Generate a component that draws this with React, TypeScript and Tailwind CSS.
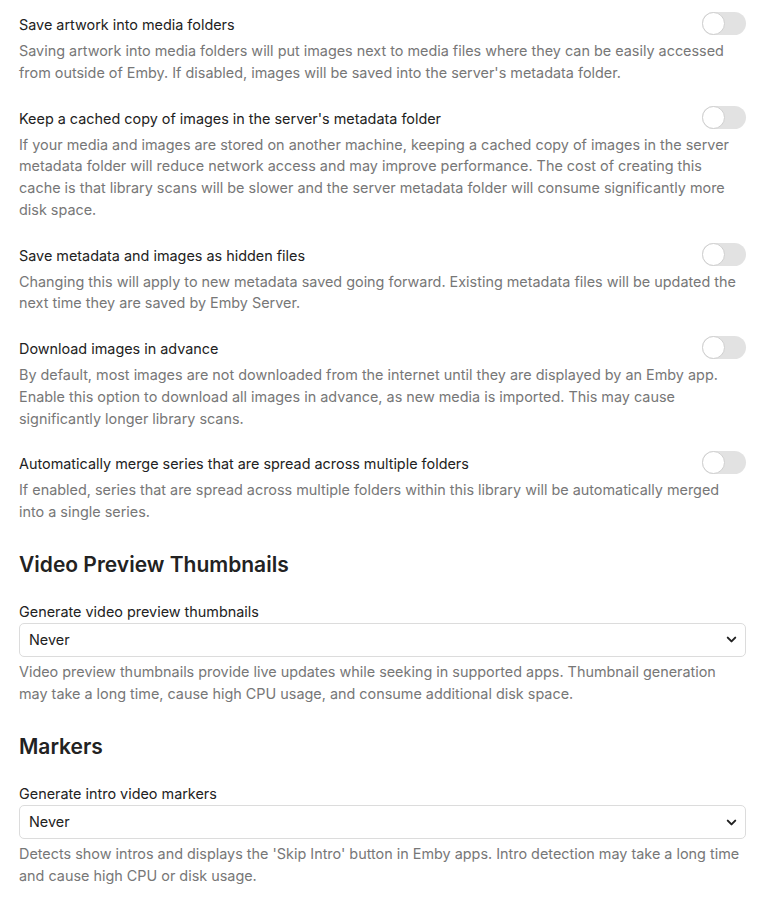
import React from "react";

const font = { fontFamily: "Inter, 'Noto Sans', sans-serif" };

function Toggle() {
  return (
    <div className="relative -mt-[2px] h-[23px] w-[44px] shrink-0 rounded-full bg-[#e2e2e2]">
      <div className="absolute left-0 top-0 h-[23px] w-[23px] rounded-full border border-[#cfcfcf] bg-white" />
    </div>
  );
}

function ToggleItem({ title, desc, first }: { title: string; desc: string; first?: boolean }) {
  return (
    <div className={first ? "" : "mt-[24px]"}>
      <div className="flex items-start justify-between">
        <div className="text-[14.4px] leading-[22px] text-[#222]">{title}</div>
        <Toggle />
      </div>
      <div className="mr-[5px] mt-[4px] text-[14.4px] leading-[21.75px] text-[#777]">{desc}</div>
    </div>
  );
}

function Chevron() {
  return (
    <svg width="15" height="15" viewBox="0 0 24 24" fill="none" stroke="#222" strokeWidth="3.2" strokeLinecap="round" strokeLinejoin="round">
      <path d="M6 9l6 6 6-6" />
    </svg>
  );
}

function SelectField({ label, desc }: { label: string; desc: string }) {
  return (
    <div>
      <div className="text-[14.4px] leading-[22px] text-[#222]">{label}</div>
      <div className="flex h-[34px] items-center justify-between rounded-[5px] border border-[#dcdcdc] bg-white pl-[9px] pr-[6px]">
        <span className="text-[14.4px] text-[#222]">Never</span>
        <Chevron />
      </div>
      <div className="mr-[5px] mt-[4px] text-[14.4px] leading-[21.75px] text-[#777]">{desc}</div>
    </div>
  );
}

export default function App() {
  return (
    <div className="min-h-[905px] bg-white pl-[19px] pr-[24px] pt-[14px]" style={font}>
      <ToggleItem
        first
        title="Save artwork into media folders"
        desc="Saving artwork into media folders will put images next to media files where they can be easily accessed from outside of Emby. If disabled, images will be saved into the server's metadata folder."
      />
      <ToggleItem
        title="Keep a cached copy of images in the server's metadata folder"
        desc="If your media and images are stored on another machine, keeping a cached copy of images in the server metadata folder will reduce network access and may improve performance. The cost of creating this cache is that library scans will be slower and the server metadata folder will consume significantly more disk space."
      />
      <ToggleItem
        title="Save metadata and images as hidden files"
        desc="Changing this will apply to new metadata saved going forward. Existing metadata files will be updated the next time they are saved by Emby Server."
      />
      <ToggleItem
        title="Download images in advance"
        desc="By default, most images are not downloaded from the internet until they are displayed by an Emby app. Enable this option to download all images in advance, as new media is imported. This may cause significantly longer library scans."
      />
      <ToggleItem
        title="Automatically merge series that are spread across multiple folders"
        desc="If enabled, series that are spread across multiple folders within this library will be automatically merged into a single series."
      />

      <h2 className="mt-[28px] text-[21px] font-semibold leading-[28px] text-[#222]">Video Preview Thumbnails</h2>
      <div className="mt-[22px]">
        <SelectField
          label="Generate video preview thumbnails"
          desc="Video preview thumbnails provide live updates while seeking in supported apps. Thumbnail generation may take a long time, cause high CPU usage, and consume additional disk space."
        />
      </div>

      <h2 className="mt-[29px] text-[21px] font-semibold leading-[28px] text-[#222]">Markers</h2>
      <div className="mt-[22px]">
        <SelectField
          label="Generate intro video markers"
          desc="Detects show intros and displays the 'Skip Intro' button in Emby apps. Intro detection may take a long time and cause high CPU or disk usage."
        />
      </div>
    </div>
  );
}
